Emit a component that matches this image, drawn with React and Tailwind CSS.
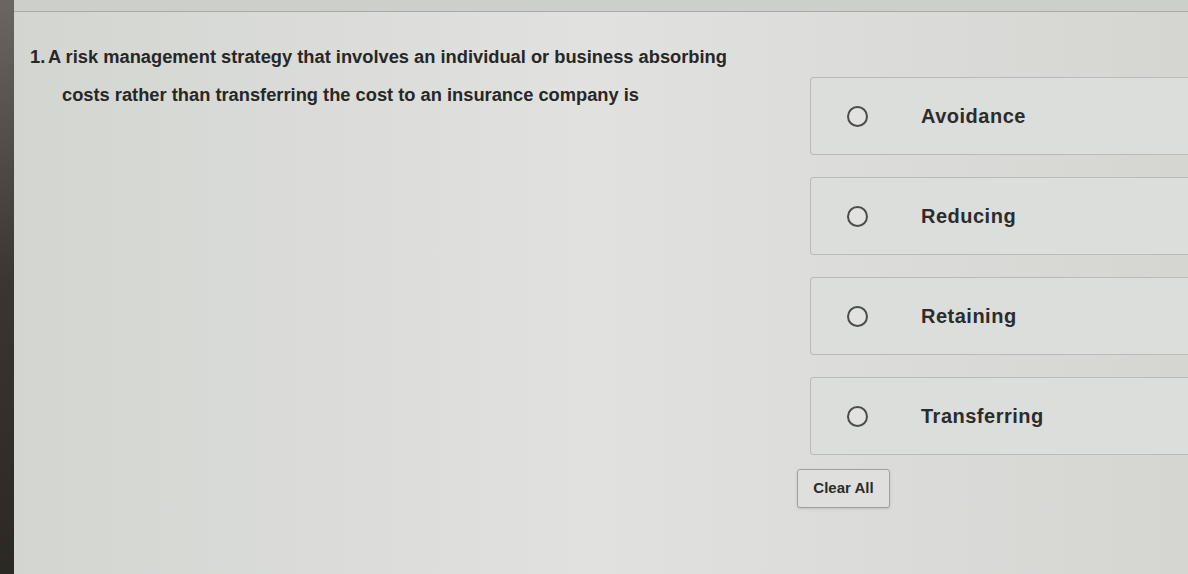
const options = ["Avoidance", "Reducing", "Retaining", "Transferring"];

function Option({ label }) {
  return (
    <label className="flex h-[78px] cursor-pointer items-center rounded-l-[4px] border border-r-0 border-[#b9bbb7] bg-[#dcdedb] pl-[36px]">
      <input type="radio" name="q1" className="peer sr-only" />
      <span className="h-[21px] w-[21px] rounded-full border-2 border-[#4a4c4a] bg-[#e2e3e0]" />
      <span className="ml-[53px] text-[20px] font-bold tracking-[0.5px] text-[#2b2c2b]">{label}</span>
    </label>
  );
}

export default function App() {
  return (
    <div
      className="flex h-[574px] w-[1188px] overflow-hidden bg-gradient-to-r from-[#d3d5d1] via-[#e1e2df] to-[#d5d6d2]"
      style={{ fontFamily: '"Liberation Sans", Arial, sans-serif' }}
    >
      {/* screen bezel */}
      <div className="w-[14px] shrink-0 bg-gradient-to-b from-[#6b6760] via-[#3a3530] to-[#2c2824]" />

      <div className="flex flex-1 flex-col">
        <div className="h-[12px] border-b border-[#a9aba7] bg-[#cdcfcb]" />

        <div className="grid flex-1 grid-cols-[796px_1fr]">
          {/* question */}
          <div className="pl-[16px] pt-[26px]">
            <p className="flex text-[18.3px] font-bold leading-[38px] text-[#262726]">
              <span className="w-[32px] shrink-0">1.</span>
              <span className="w-[740px]">
                <span className="-ml-[14px]">A risk management strategy that involves an individual or business absorbing</span>
                <br />
                costs rather than transferring the cost to an insurance company is
              </span>
            </p>
          </div>

          {/* answers */}
          <div className="flex flex-col gap-[22px] pt-[65px]">
            {options.map((o) => (
              <Option key={o} label={o} />
            ))}
            <div className="-ml-[13px] -mt-[8px]">
              <button className="h-[39px] w-[93px] rounded-[3px] border border-[#9fa19d] bg-[#dfe0dd] text-[15px] font-bold text-[#2b2c2b] shadow-sm">
                Clear All
              </button>
            </div>
          </div>
        </div>
      </div>
    </div>
  );
}
